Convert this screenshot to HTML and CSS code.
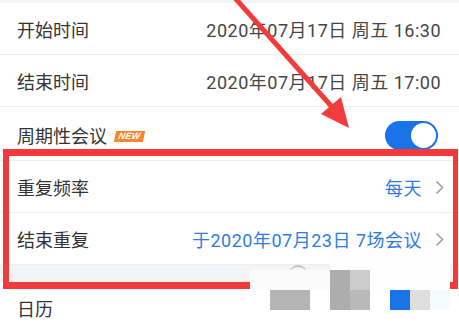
FILE: index.html
```html
<!DOCTYPE html>
<html>
<head>
<meta charset="utf-8">
<link rel="stylesheet" href="styles.css">
</head>
<body>
<div class="page">
  <div class="topgap"></div>
  <div class="row"><span class="label">开始时间</span><span class="value">2020年07月17日 周五 16:30</span></div>
  <div class="row"><span class="label">结束时间</span><span class="value">2020年07月17日 周五 17:00</span></div>
  <div class="row tall"><span class="label">周期性会议<span class="badge">NEW</span></span><span class="switch"><span class="knob"></span></span></div>
  <div class="row"><span class="label">重复频率</span><span class="link">每天<svg class="chev" width="9" height="15" viewBox="0 0 9 15"><path d="M1.5 1.5 L7.5 7.5 L1.5 13.5" fill="none" stroke="#a0a0a0" stroke-width="1.6"/></svg></span></div>
  <div class="row"><span class="label">结束重复</span><span class="link">于2020年07月23日 7场会议<svg class="chev" width="9" height="15" viewBox="0 0 9 15"><path d="M1.5 1.5 L7.5 7.5 L1.5 13.5" fill="none" stroke="#a0a0a0" stroke-width="1.6"/></svg></span></div>
  <div class="gap"></div>
  <div class="row"><span class="label">日历</span></div>

  <div class="arc"></div>
  <div class="redbox"></div>
  <div class="mosaic">
    <div class="m" style="left:330px;top:250px;width:120px;height:20px;background:#fefefe"></div>
    <div class="m" style="left:250px;top:270px;width:80px;height:20px;background:#fbfbfb"></div>
    <div class="m" style="left:330px;top:270px;width:20px;height:20px;background:#adadad"></div>
    <div class="m" style="left:350px;top:270px;width:20px;height:20px;background:#cbcccb"></div>
    <div class="m" style="left:370px;top:270px;width:80px;height:20px;background:#fefefe"></div>
    <div class="m" style="left:270px;top:290px;width:40px;height:20px;background:#b4b4b4"></div>
    <div class="m" style="left:330px;top:290px;width:20px;height:20px;background:#adadad"></div>
    <div class="m" style="left:350px;top:290px;width:20px;height:20px;background:#b9b9b9"></div>
    <div class="m" style="left:390px;top:290px;width:20px;height:20px;background:#1a73e8"></div>
    <div class="m" style="left:410px;top:290px;width:20px;height:20px;background:#dedede"></div>
    <div class="m" style="left:430px;top:290px;width:20px;height:20px;background:#f4faff"></div>
  </div>
  <svg class="arrow" width="459" height="331" viewBox="0 0 459 331">
    <line x1="235" y1="-2" x2="333" y2="108" stroke="#f23c3c" stroke-width="5"/>
    <polygon points="349,128 321,114 341,97" fill="#f23c3c"/>
  </svg>
</div>
</body>
</html>
```
FILE: styles.css
```css
html, body {
  margin: 0;
  padding: 0;
  background: #ffffff;
}
.page {
  position: relative;
  width: 459px;
  height: 331px;
  overflow: hidden;
  font-family: "Roboto", "Noto Sans CJK SC", "Noto Sans", sans-serif;
  background: #ffffff;
}
.topgap {
  height: 3px;
  background: #f3f4f6;
}
.row {
  height: 52px;
  box-sizing: border-box;
  display: flex;
  align-items: center;
  justify-content: space-between;
  padding: 1px 15px 0 17px;
  border-bottom: 1px solid #eeeeee;
}
.row.tall {
  height: 54px;
  padding-top: 3px;
}
.label {
  font-size: 18px;
  color: #333333;
  display: flex;
  align-items: center;
}
.value {
  font-size: 18px;
  color: #454545;
  padding-right: 3px;
  letter-spacing: 0.5px;
}
.badge {
  margin-left: 8px;
  width: 29px;
  height: 11px;
  background: #f7862c;
  color: #ffffff;
  font-family: "Liberation Sans", sans-serif;
  font-size: 9px;
  font-weight: bold;
  font-style: italic;
  line-height: 11px;
  text-align: center;
  letter-spacing: 0.3px;
  transform: skewX(-12deg);
  margin-top: 2px;
}
.switch {
  width: 53px;
  height: 29px;
  border-radius: 15px;
  background: #1a73e8;
  display: flex;
  align-items: center;
  justify-content: flex-end;
  padding: 2px;
  box-sizing: border-box;
  margin-right: 6px;
}
.knob {
  width: 25px;
  height: 25px;
  border-radius: 50%;
  background: #ffffff;
}
.link {
  font-size: 18px;
  color: #2f7bdf;
  display: flex;
  align-items: center;
  letter-spacing: 0.5px;
}
.chev {
  margin-left: 13px;
}
.gap {
  height: 16px;
  background: #f3f4f6;
  border-bottom: 1px solid #eeeeee;
}
.redbox {
  position: absolute;
  left: 3px;
  top: 149px;
  width: 455px;
  height: 140px;
  box-sizing: border-box;
  border: 6px solid #f2393b;
  border-top-width: 7px;
  border-bottom-width: 7px;
  border-right-width: 5px;
}
.arc {
  position: absolute;
  left: 289px;
  top: 265px;
  width: 18px;
  height: 18px;
  border-radius: 50%;
  border-top: 2px solid #bdbdbd;
  box-sizing: border-box;
}
.m {
  position: absolute;
}
.arrow {
  position: absolute;
  left: 0;
  top: 0;
}
```
